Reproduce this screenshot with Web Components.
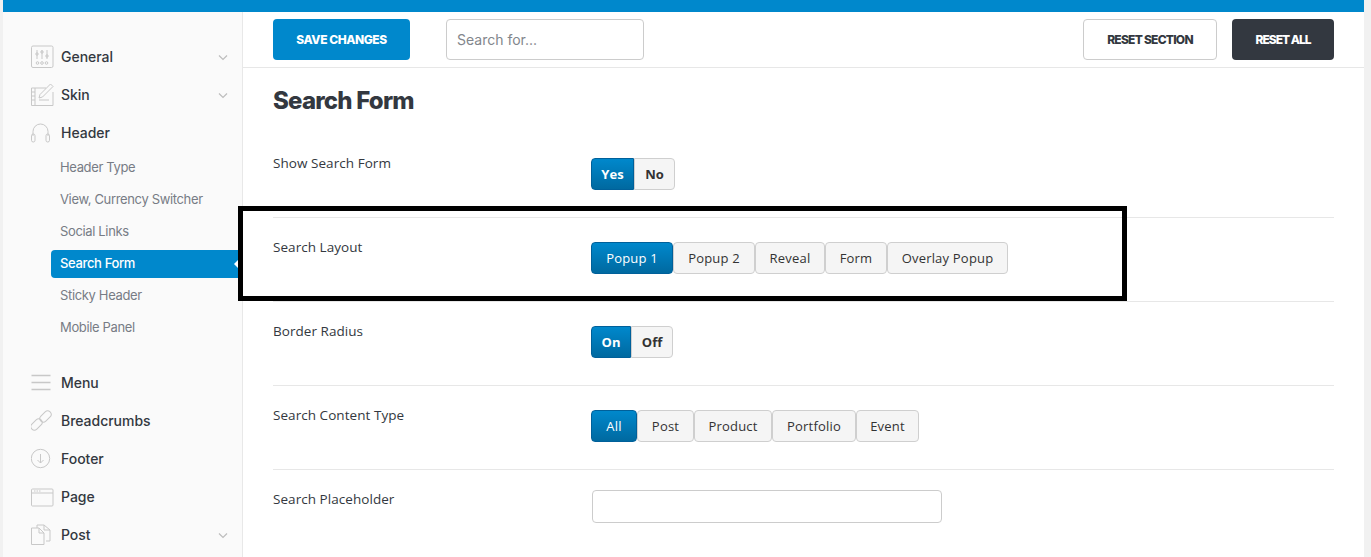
<!DOCTYPE html>
<html>
<head>
<meta charset="utf-8">
<title>Search Form</title>
<style>
  html, body { margin: 0; height: 557px; overflow: hidden; background: #f1f1f1; }
</style>
</head>
<body>
<admin-shell>
  <side-nav slot="side">
    <nav-item icon="general" arrow>General</nav-item>
    <nav-item icon="skin" arrow>Skin</nav-item>
    <nav-item icon="header">Header</nav-item>
    <sub-nav>
      <sub-item>Header Type</sub-item>
      <sub-item>View, Currency Switcher</sub-item>
      <sub-item>Social Links</sub-item>
      <sub-item active>Search Form</sub-item>
      <sub-item>Sticky Header</sub-item>
      <sub-item>Mobile Panel</sub-item>
    </sub-nav>
    <nav-item icon="menu">Menu</nav-item>
    <nav-item icon="link">Breadcrumbs</nav-item>
    <nav-item icon="footer">Footer</nav-item>
    <nav-item icon="page">Page</nav-item>
    <nav-item icon="post" arrow>Post</nav-item>
  </side-nav>
  <tool-bar slot="top"></tool-bar>
  <h-title>Search Form</h-title>
  <opt-row label="Show Search Form"><btn-group items="Yes,No" widths="43,41" bold></btn-group></opt-row>
  <opt-row label="Search Layout"><btn-group items="Popup 1,Popup 2,Reveal,Form,Overlay Popup" widths="82,82,70,62,121"></btn-group></opt-row>
  <opt-row label="Border Radius"><btn-group items="On,Off" widths="40,42" bold></btn-group></opt-row>
  <opt-row label="Search Content Type"><btn-group items="All,Post,Product,Portfolio,Event" widths="46,57,78,84,63"></btn-group></opt-row>
  <opt-row label="Search Placeholder" flat><text-box></text-box></opt-row>
</admin-shell>
<mark-frame></mark-frame>

<script>
const HEAD = '"Inter", "Noto Sans", sans-serif';
const BODY = '"Open Sans", sans-serif';

const ICONS = {
  general: `<rect x=".5" y="1" width="21.5" height="21.5" rx="1.5"/><path d="M6 5v9M11 5v9M16 5v9"/><circle cx="6" cy="9" r="1.2"/><circle cx="11" cy="7" r="1.2"/><circle cx="16" cy="11" r="1.2"/><circle cx="6.5" cy="18" r="1.3"/><circle cx="11" cy="18" r="1.3"/><circle cx="15.5" cy="18" r="1.3"/>`,
  skin: `<path d="M15 5H.5v17.5H22V9"/><path d="M4 5v17.5M.5 9H4M.5 13H4M.5 17H4"/><path d="M8 15l1-3.5L19.5 1 22 3.5 11.5 14z"/><path d="M8 17h10"/>`,
  header: `<path d="M2 15v-4.5a7.5 7.5 0 0 1 15 0V15"/><rect x=".5" y="13" width="3.5" height="8" rx="1.7"/><rect x="15" y="13" width="3.5" height="8" rx="1.7"/>`,
  menu: `<path d="M.5 4.5h19M.5 11.5h19M.5 18.5h19" stroke-width="1.5"/>`,
  link: `<rect x="8" y="4" width="13" height="7" rx="3.5" transform="rotate(-45 14.5 7.5)"/><rect x="-1" y="12" width="13" height="7" rx="3.5" transform="rotate(-45 5.5 15.5)"/>`,
  footer: `<circle cx="9.5" cy="11.5" r="9.2"/><path d="M9.5 7v9M6.5 13l3 3 3-3"/>`,
  page: `<rect x=".5" y="4" width="21.5" height="17" rx="1"/><path d="M.5 8H22M3 6h1.5M5.5 6H7M8 6h1.5"/>`,
  post: `<path d="M.5 5H8l5 5v11.5H.5z"/><path d="M8 5v5h5"/><path d="M6 5V2h7l6 5v11h-4"/><path d="M13 2v5h6"/>`
};

// every element here is markup + styles in an open shadow root
function define(name, html) {
  customElements.define(name, class extends HTMLElement {
    constructor() {
      super();
      this.attachShadow({ mode: "open" });
      this.shadowRoot.innerHTML = typeof html === "function" ? html(this) : html;
    }
  });
}

define("admin-shell", `
  <style>
    :host { display: block; height: 557px; margin: 0 7px 0 3px; border-top: 12px solid #0088cc; box-sizing: border-box;
      background: #fff; overflow: hidden; }
    .wrap { display: grid; grid-template-columns: 240px 1fr; height: 100%; }
    .main { display: flex; flex-direction: column; min-width: 0; }
    .body { padding: 0 30px; }
  </style>
  <div class="wrap">
    <slot name="side"></slot>
    <div class="main">
      <slot name="top"></slot>
      <div class="body"><slot></slot></div>
    </div>
  </div>`);

define("side-nav", `
  <style>
    :host { display: block; background: #fafafa; border-right: 1px solid #e8e8e8; padding-top: 26px; box-sizing: border-box; height: 100%; }
  </style>
  <slot></slot>`);

define("nav-item", el => `
  <style>
    :host { display: flex; align-items: center; height: 38px; padding-left: 28px; padding-right: 13px;
      font: 500 14px ${HEAD}; letter-spacing: -.03px; color: #333840; }
    svg.ic { width: 24px; height: 24px; fill: none; stroke: #c8c8c8; stroke-width: 1; margin-right: 6px; flex: none; }
    .label { flex: 1; margin-top: -2px; }
    svg.ar { width: 12px; height: 8px; fill: none; stroke: #bdbdbd; stroke-width: 1.2; margin-top: 2px; }
  </style>
  <svg class="ic" viewBox="0 0 24 24">${ICONS[el.getAttribute("icon")] || ""}</svg>
  <span class="label"><slot></slot></span>
  ${el.hasAttribute("arrow") ? '<svg class="ar" viewBox="0 0 12 8"><path d="M2 1.5l4 4 4-4"/></svg>' : ""}`);

define("sub-nav", `
  <style>:host { display: flex; flex-direction: column; gap: 4px; padding: 2px 0; margin-bottom: 20px; }</style>
  <slot></slot>`);

define("sub-item", el => `
  <style>
    :host { display: flex; align-items: center; height: 28px; margin-left: 48px; padding-left: 9px; padding-bottom: 2px; box-sizing: border-box;
      border-radius: 4px 0 0 4px; position: relative; font: 400 13px ${HEAD}; letter-spacing: -.35px; color: #777c85; }
    :host([active]) { background: #0088cc; color: #fff; font-weight: 500; }
    i { position: absolute; right: 3px; top: 9px; border: 5px solid transparent; border-right: 5px solid #fff; border-left: 0; }
  </style>
  <slot></slot>${el.hasAttribute("active") ? "<i></i>" : ""}`);

define("act-btn", `
  <style>
    :host { display: flex; align-items: center; justify-content: center; box-sizing: border-box; height: 41px; border-radius: 4px;
      font: 800 12px ${HEAD}; text-transform: uppercase; white-space: nowrap;
      background: #0088cc; color: #fff; }
    :host([kind=line]) { background: #fff; color: #333840; border: 1px solid #ccc; }
    :host([kind=dark]) { background: #333840; color: #fff; }
  </style>
  <slot></slot>`);

define("tool-bar", `
  <style>
    :host { display: flex; align-items: center; box-sizing: border-box; height: 56px; padding: 7px 30px 8px; border-bottom: 1px solid #e7e7e7; }
    .search { box-sizing: border-box; width: 198px; height: 41px; margin-left: 36px; padding: 0 10px; border: 1px solid #ccc; border-radius: 4px;
      font: 400 14px ${HEAD}; color: #82868c; display: flex; align-items: center; }
    .right { margin-left: auto; display: flex; gap: 15px; }
  </style>
  <act-btn style="width:137px; letter-spacing:-.45px">Save Changes</act-btn>
  <div class="search">Search for...</div>
  <div class="right">
    <act-btn kind="line" style="width:134px; letter-spacing:-.75px">Reset Section</act-btn>
    <act-btn kind="dark" style="width:102px; letter-spacing:-1px">Reset All</act-btn>
  </div>`);

define("h-title", `
  <style>
    :host { display: block; height: 66px; padding-top: 17px; box-sizing: border-box; font: 800 24px/32px ${HEAD}; letter-spacing: -.8px; color: #333840; }
  </style>
  <slot></slot>`);

define("opt-row", el => `
  <style>
    :host { display: grid; grid-template-columns: 318px 1fr; box-sizing: border-box; height: 84px; padding-top: 24px;
      border-bottom: 1px solid #e7e7e7; }
    :host([flat]) { padding-top: 20px; border-bottom: 0; }
    .label { font: 400 13.5px/18px ${BODY}; color: #333840; letter-spacing: .05px; margin-top: -4px; }
    :host([flat]) .label { margin-top: 0; }
  </style>
  <div class="label">${el.getAttribute("label")}</div>
  <div><slot></slot></div>`);

define("btn-group", el => {
  const bold = el.hasAttribute("bold");
  const widths = el.getAttribute("widths").split(",");
  const btns = el.getAttribute("items").split(",")
    .map((t, i) => `<b class="${i === 0 ? "on" : ""}" style="width:${widths[i]}px">${t}</b>`).join("");
  return `
  <style>
    :host { display: inline-flex; height: 32px; vertical-align: top; }
    b { display: flex; align-items: center; justify-content: center; box-sizing: border-box; height: 32px;
      font: ${bold ? 700 : 400} 13px ${BODY}; letter-spacing: ${bold ? 0 : ".2px"}; color: #333; background: #f5f5f5; border: 1px solid #cfcfcf; border-radius: ${bold ? 0 : 4}px; }
    b:last-child { border-radius: ${bold ? "0 4px 4px 0" : "4px"}; }
    b.on { background: linear-gradient(#0088cc, #0069a0); border-color: #00609a; color: #fff; border-radius: ${bold ? "4px 0 0 4px" : "4px"}; }
  </style>
  ${btns}`;
});

define("text-box", `
  <style>
    :host { display: block; box-sizing: border-box; width: 350px; height: 33px; margin-left: 1px; background: #fff; border: 1px solid #ccc; border-radius: 4px; }
  </style>`);

define("mark-frame", `
  <style>
    :host { position: fixed; left: 238px; top: 206px; width: 889px; height: 95px; box-sizing: border-box; border: 5px solid #000; pointer-events: none; }
  </style>`);
</script>
</body>
</html>
